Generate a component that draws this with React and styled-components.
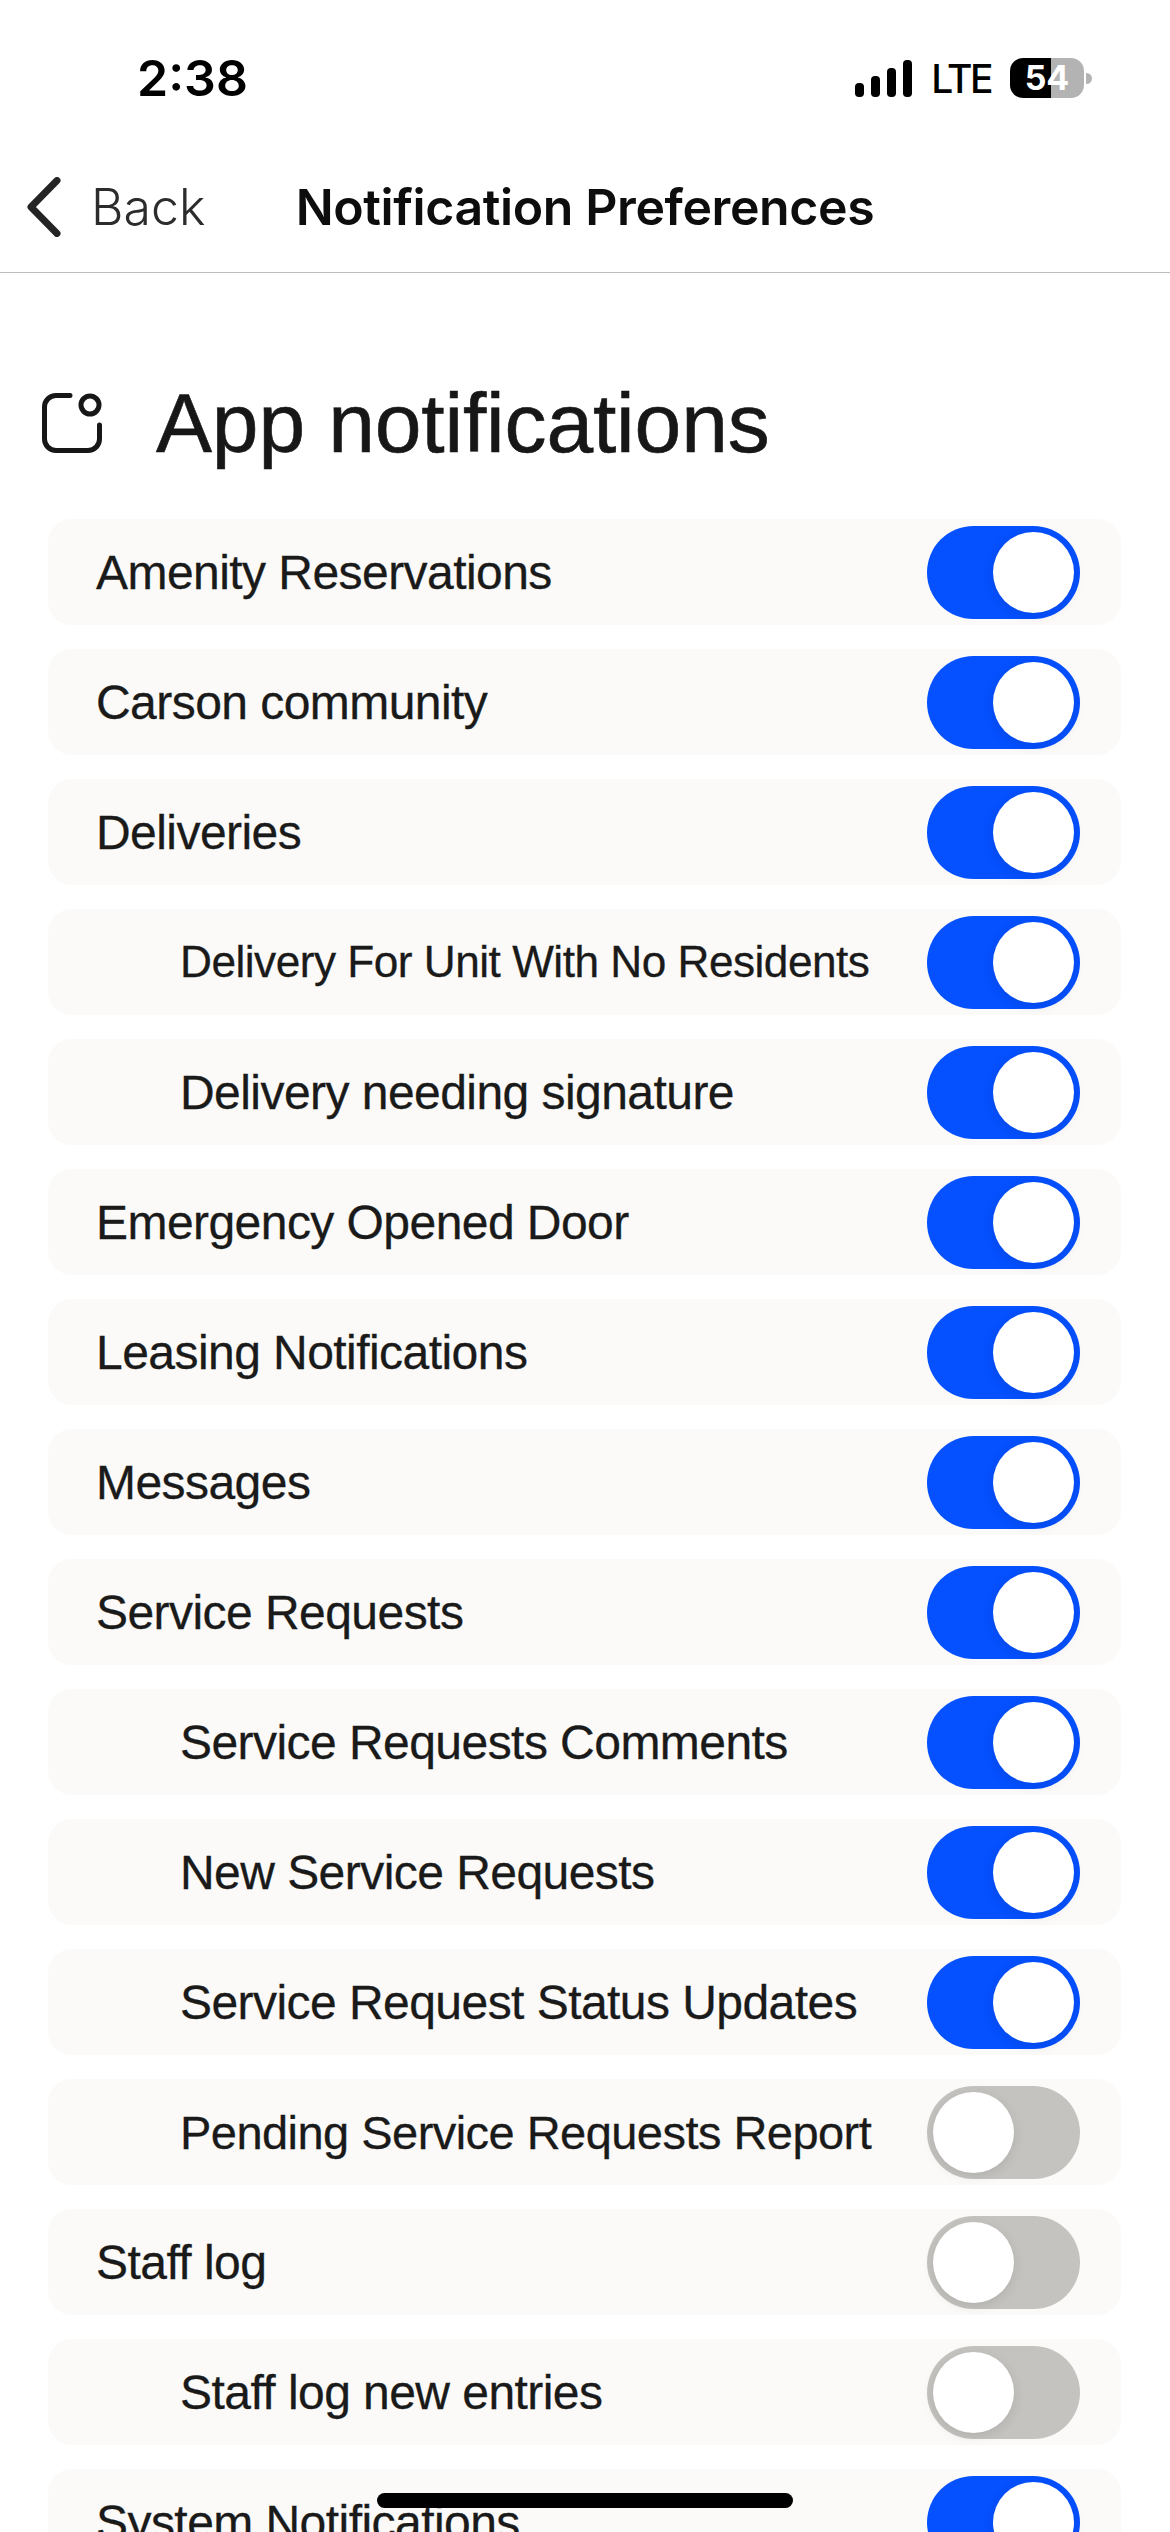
import React from "react";
import styled, { createGlobalStyle } from "styled-components";

const Global = createGlobalStyle`
  html, body { margin: 0; padding: 0; background: #fff; }
  #root { width: 1170px; }
`;

const Screen = styled.div`
  position: relative;
  width: 1170px;
  height: 2532px;
  overflow: hidden;
  background: #fff;
  font-family: Inter, "Liberation Sans", sans-serif;
  color: #181818;
`;

const StatusBar = styled.div`
  height: 116px;
  box-sizing: border-box;
  padding: 40px 86px 0 137px;
  display: flex;
  align-items: center;
  justify-content: space-between;
`;

const Time = styled.div`
  font-size: 50px;
  font-weight: 600;
  color: #000;
  line-height: 1;
`;

const StatusIcons = styled.div`
  display: flex;
  align-items: center;
  gap: 19px;
`;

const Signal = styled.div`
  display: flex;
  align-items: flex-end;
  gap: 6.5px;
  height: 37px;
`;

const SignalBar = styled.span`
  width: 9.5px;
  height: ${(p) => p.$h}px;
  background: #000;
  border-radius: 4px;
`;

const Lte = styled.div`
  font-size: 39px;
  font-weight: 500;
  line-height: 1;
  color: #000;
  letter-spacing: -2.5px;
`;

const Battery = styled.div`
  position: relative;
  width: 74px;
  height: 40px;
  border-radius: 13px;
  background: linear-gradient(90deg, #000 0, #000 41px, #b3b3b3 41px);
  color: #fff;
  font-size: 34px;
  font-weight: 700;
  display: flex;
  align-items: center;
  justify-content: center;
  line-height: 1;
  &::after {
    content: "";
    position: absolute;
    right: -8px;
    top: 15px;
    width: 6px;
    height: 11px;
    border-radius: 0 6px 6px 0;
    background: #b3b3b3;
  }
`;

const Nav = styled.header`
  height: 158px;
  box-sizing: border-box;
  padding-top: 26px;
  border-bottom: 1.5px solid #bcbcbc;
  display: grid;
  grid-template-columns: 1fr auto 1fr;
  align-items: center;
  margin-top: -1px;
`;

const BackLink = styled.div`
  display: flex;
  align-items: center;
  gap: 30px;
  padding-left: 27px;
  font-size: 50px;
  font-weight: 300;
  color: #2c2c2c;
`;

const NavTitle = styled.div`
  font-size: 50px;
  font-weight: 600;
  letter-spacing: -0.008em;
  color: #0d0d0d;
`;

const SectionHead = styled.div`
  display: flex;
  align-items: center;
  gap: 54px;
  box-sizing: border-box;
  height: 246px;
  padding: 54px 0 0 42px;
`;

const SectionTitle = styled.h1`
  margin: 0;
  font-family: "Liberation Sans", Arial, sans-serif;
  font-size: 84px;
  font-weight: 400;
  letter-spacing: -0.002em;
  -webkit-text-stroke: 0.6px #171717;
  line-height: 1;
  color: #171717;
`;

const List = styled.div`
  margin: 0 49px 0 48px;
  display: flex;
  flex-direction: column;
  gap: 24px;
`;

const Row = styled.div`
  height: 106px;
  box-sizing: border-box;
  flex: none;
  display: flex;
  align-items: center;
  justify-content: space-between;
  padding: 0 41px 0 ${(p) => (p.$sub ? 132 : 48)}px;
  background: #fbfaf8;
  border-radius: 24px;
`;

const Label = styled.span`
  font-family: "Liberation Sans", Arial, sans-serif;
  font-size: ${(p) => p.$size}px;
  font-weight: 400;
  letter-spacing: -0.0115em;
  -webkit-text-stroke: 0.3px #1a1a1a;
  color: #1a1a1a;
`;

const Toggle = styled.div`
  width: 153px;
  height: 93px;
  box-sizing: border-box;
  flex: none;
  padding: 6px;
  border-radius: 47px;
  display: flex;
  justify-content: ${(p) => (p.$on ? "flex-end" : "flex-start")};
  background: ${(p) => (p.$on ? "#0550ff" : "#c4c3bf")};
`;

const Knob = styled.span`
  width: 81px;
  height: 81px;
  border-radius: 50%;
  background: #fff;
  box-shadow: 0 3px 12px rgba(0, 0, 0, 0.1);
`;

const HomeIndicator = styled.div`
  position: absolute;
  left: 377px;
  top: 2493px;
  width: 416px;
  height: 15px;
  border-radius: 8px;
  background: #000;
`;

const rows = [
  { label: "Amenity Reservations", on: true },
  { label: "Carson community", on: true },
  { label: "Deliveries", on: true },
  { label: "Delivery For Unit With No Residents", sub: true, on: true, size: 44.2 },
  { label: "Delivery needing signature", sub: true, on: true },
  { label: "Emergency Opened Door", on: true },
  { label: "Leasing Notifications", on: true },
  { label: "Messages", on: true },
  { label: "Service Requests", on: true },
  { label: "Service Requests Comments", sub: true, on: true },
  { label: "New Service Requests", sub: true, on: true },
  { label: "Service Request Status Updates", sub: true, on: true },
  { label: "Pending Service Requests Report", sub: true, on: false, size: 47 },
  { label: "Staff log", on: false },
  { label: "Staff log new entries", sub: true, on: false },
  { label: "System Notifications", on: true },
];

const Chevron = () => (
  <svg width="34" height="60" viewBox="0 0 34 60" fill="none">
    <path d="M30 3.5 L4 30 L30 56.5" stroke="#242424" strokeWidth="7" strokeLinecap="round" strokeLinejoin="round" />
  </svg>
);

const AppIcon = () => (
  <svg width="60" height="60" viewBox="0 0 60 60" fill="none" stroke="#171717" strokeWidth="5" strokeLinecap="round">
    <path d="M28 2.5 H14 A11.5 11.5 0 0 0 2.5 14 V46 A11.5 11.5 0 0 0 14 57.5 H46 A11.5 11.5 0 0 0 57.5 46 V32" />
    <circle cx="48" cy="12" r="9" />
  </svg>
);

export default function App() {
  return (
    <Screen>
      <Global />
      <StatusBar>
        <Time>2:38</Time>
        <StatusIcons>
          <Signal>
            {[14, 21, 29, 37].map((h) => (
              <SignalBar key={h} $h={h} />
            ))}
          </Signal>
          <Lte>LTE</Lte>
          <Battery>54</Battery>
        </StatusIcons>
      </StatusBar>
      <Nav>
        <BackLink>
          <Chevron />
          Back
        </BackLink>
        <NavTitle>Notification Preferences</NavTitle>
      </Nav>
      <SectionHead>
        <AppIcon />
        <SectionTitle>App notifications</SectionTitle>
      </SectionHead>
      <List>
        {rows.map(({ label, sub, on, size = 48 }) => (
          <Row key={label} $sub={!!sub}>
            <Label $size={size}>{label}</Label>
            <Toggle $on={on}>
              <Knob />
            </Toggle>
          </Row>
        ))}
      </List>
      <HomeIndicator />
    </Screen>
  );
}
